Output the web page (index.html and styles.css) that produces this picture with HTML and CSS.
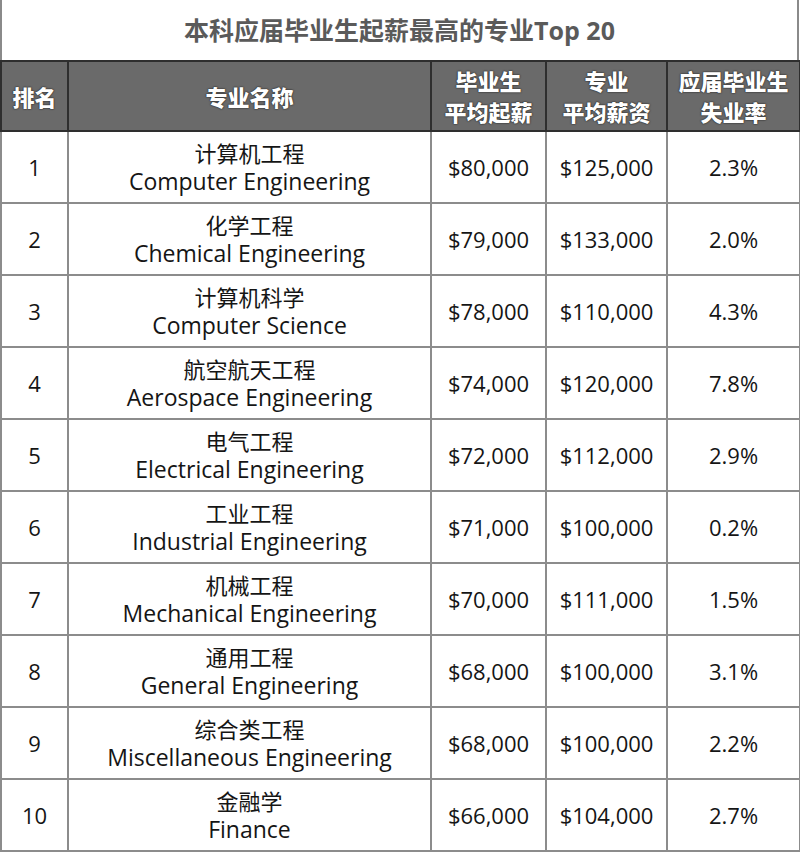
FILE: index.html
```html
<!DOCTYPE html>
<html lang="zh">
<head>
<meta charset="utf-8">
<title>本科应届毕业生起薪最高的专业Top 20</title>
<link rel="stylesheet" href="styles.css">
</head>
<body>
<div class="sheet">
  <div class="title">本科应届毕业生起薪最高的专业Top 20</div>
  <table class="grid">
    <colgroup>
      <col class="c-rank"><col class="c-major"><col class="c-start"><col class="c-avg"><col class="c-rate">
    </colgroup>
    <thead>
      <tr>
        <th>排名</th>
        <th>专业名称</th>
        <th>毕业生<br>平均起薪</th>
        <th>专业<br>平均薪资</th>
        <th>应届毕业生<br>失业率</th>
      </tr>
    </thead>
    <tbody>
      <tr><td>1</td><td class="major"><span class="cn">计算机工程</span><span class="en">Computer Engineering</span></td><td>$80,000</td><td>$125,000</td><td>2.3%</td></tr>
      <tr><td>2</td><td class="major"><span class="cn">化学工程</span><span class="en">Chemical Engineering</span></td><td>$79,000</td><td>$133,000</td><td>2.0%</td></tr>
      <tr><td>3</td><td class="major"><span class="cn">计算机科学</span><span class="en">Computer Science</span></td><td>$78,000</td><td>$110,000</td><td>4.3%</td></tr>
      <tr><td>4</td><td class="major"><span class="cn">航空航天工程</span><span class="en">Aerospace Engineering</span></td><td>$74,000</td><td>$120,000</td><td>7.8%</td></tr>
      <tr><td>5</td><td class="major"><span class="cn">电气工程</span><span class="en">Electrical Engineering</span></td><td>$72,000</td><td>$112,000</td><td>2.9%</td></tr>
      <tr><td>6</td><td class="major"><span class="cn">工业工程</span><span class="en">Industrial Engineering</span></td><td>$71,000</td><td>$100,000</td><td>0.2%</td></tr>
      <tr><td>7</td><td class="major"><span class="cn">机械工程</span><span class="en">Mechanical Engineering</span></td><td>$70,000</td><td>$111,000</td><td>1.5%</td></tr>
      <tr><td>8</td><td class="major"><span class="cn">通用工程</span><span class="en">General Engineering</span></td><td>$68,000</td><td>$100,000</td><td>3.1%</td></tr>
      <tr><td>9</td><td class="major"><span class="cn">综合类工程</span><span class="en">Miscellaneous Engineering</span></td><td>$68,000</td><td>$100,000</td><td>2.2%</td></tr>
      <tr><td>10</td><td class="major"><span class="cn">金融学</span><span class="en">Finance</span></td><td>$66,000</td><td>$104,000</td><td>2.7%</td></tr>
    </tbody>
  </table>
</div>
</body>
</html>
```

FILE: styles.css
```css
html, body {
  margin: 0;
  padding: 0;
  background: #ffffff;
}

.sheet {
  width: 799px;
  font-family: "Open Sans", "Noto Sans CJK SC", sans-serif;
  color: #151515;
}

.title {
  height: 60px;
  line-height: 60px;
  text-align: center;
  font-family: "Open Sans", "Noto Sans CJK SC", sans-serif;
  font-size: 25px;
  font-weight: 700;
  color: #5a5a5a;
  border-left: 2px solid #8a8a8a;
  border-right: 2px solid #8a8a8a;
  box-sizing: border-box;
}

.grid {
  width: 799px;
  border-collapse: collapse;
  table-layout: fixed;
}

.c-rank { width: 67px; }
.c-major { width: 363px; }
.c-start { width: 115px; }
.c-avg { width: 121px; }
.c-rate { width: 133px; }

.grid th {
  height: 68px;
  padding: 0;
  background: #6a6a6a;
  color: #ffffff;
  font-family: "Noto Sans CJK SC", sans-serif;
  font-size: 22px;
  font-weight: 900;
  line-height: 31px;
  text-align: center;
  border: 2px solid #2e2e2e;
  text-shadow: 0 0 2px #222, 0 0 1px #222;
}

.grid td {
  height: 70px;
  padding: 0;
  text-align: center;
  font-size: 22px;
  border: 2px solid #8c8c8c;
  vertical-align: middle;
}

.grid td.major {
  line-height: 29px;
}

.cn {
  display: block;
  font-family: "Noto Sans CJK SC", sans-serif;
  font-size: 22px;
  font-weight: 400;
  line-height: 27px;
}

.en {
  display: block;
  font-size: 23px;
  line-height: 30px;
}
```
